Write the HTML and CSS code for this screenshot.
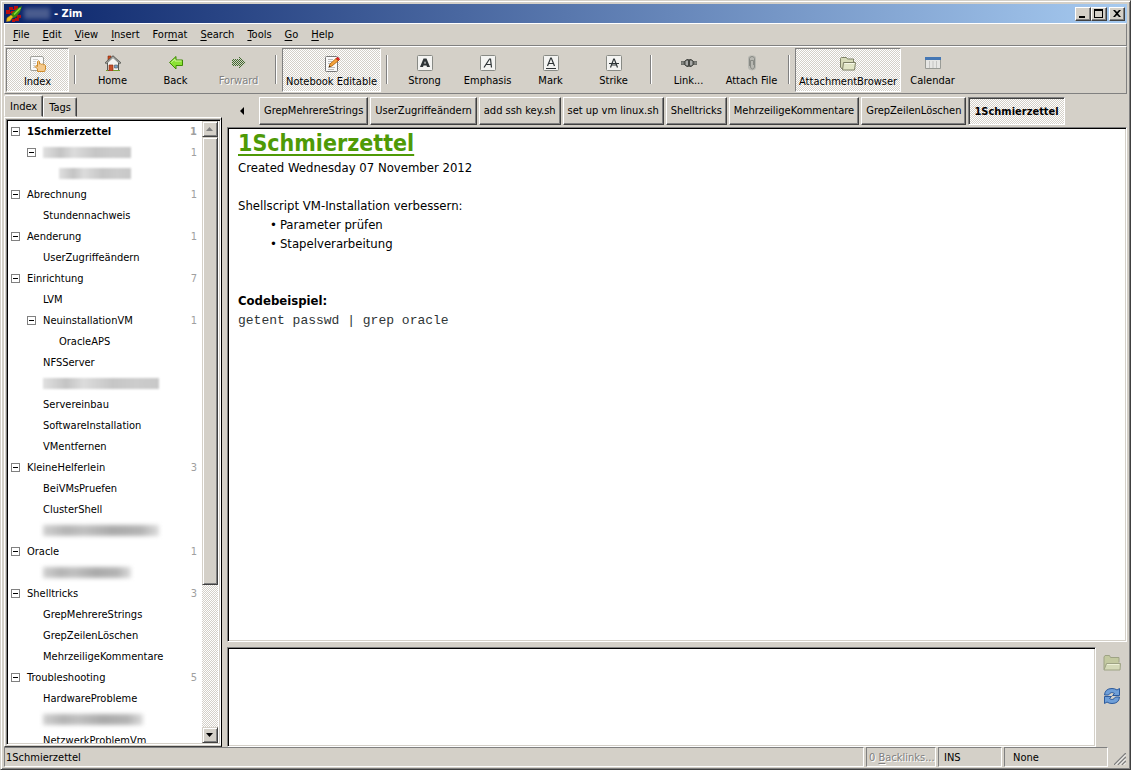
FILE: index.html
```html
<!DOCTYPE html>
<html lang="en">
<head>
<meta charset="utf-8">
<title>Zim</title>
<link rel="stylesheet" href="styles.css">
</head>
<body>
<div class="window">
  <header class="titlebar">
    <svg class="logo" viewBox="0 0 16 16"><g fill="#b80f0f"><path d="M3 1h4v3H3zM8 0h4v3H8zM0 4h4v4H0zM5 5h4v3H5zM9 12h4v3H9zM11 9h4v3h-4zM6 13h3v3H6z"/><path d="M4 3h6v1H4zM3 6h3v1H3z"/></g><path d="M16 0L12 2 6 7l-1 3 2 2 3-1 4-5z" fill="#3f8a0c"/><path d="M14.500 2L8 8.500" stroke="#8ae234" stroke-width="1.500"/><path d="M5 9L1 12l-.5 3.500L4 15l3-4z" fill="#edc31a" stroke="#a8820a" stroke-width=".5"/></svg>
    <span class="smudge smudge-title"></span>
    <h1 class="title">- Zim</h1>
    <div class="controls">
      <button class="ctl" aria-label="Minimize"><svg viewBox="0 0 12 10"><path d="M2 7h6v2H2z"/></svg></button>
      <button class="ctl" aria-label="Maximize"><svg viewBox="0 0 12 10"><path d="M1 0h9v9H1zM2 2v6h7V2z" fill-rule="evenodd"/></svg></button>
      <button class="ctl ctl-close" aria-label="Close"><svg viewBox="0 0 12 10"><path d="M2 1h2l2 2 2-2h2L7 4.500l3 3.500H8L6 6 4 8H2l3-3.500z"/></svg></button>
    </div>
  </header>
  <nav class="menubar" aria-label="Menu">
    <button class="menu"><u>F</u>ile</button><button class="menu"><u>E</u>dit</button><button class="menu"><u>V</u>iew</button><button class="menu"><u>I</u>nsert</button><button class="menu">For<u>m</u>at</button><button class="menu"><u>S</u>earch</button><button class="menu"><u>T</u>ools</button><button class="menu"><u>G</u>o</button><button class="menu"><u>H</u>elp</button>
  </nav>
  <div class="toolbar" role="toolbar">
    <button class="tool pressed" aria-pressed="true"><svg class="icon" viewBox="0 0 16 16"><rect x=".5" y=".5" width="13" height="14" rx="1.500" fill="#fafafa" stroke="#a0a09a"/><path d="M3 3.500h5M3 5.500h3M3 7.500h3M3 9.500h2M3 11.500h3" stroke="#ccc"/><path d="M7.500 15.500V13L5 10.500 6 9.500l1.500 1V5.500q1-1.500 2 0V8q1-.8 2 .3 1.200-.7 2 .4 1.500-.5 2 .8V13l-1 2.500z" fill="#f5c98b" stroke="#ce8b2a"/></svg>Index</button>
    <span class="sep"></span>
    <button class="tool"><svg class="icon" viewBox="0 0 16 16"><path d="M3 1h3v5H3z" fill="#d2491b" stroke="#7a2a10" stroke-width=".6"/><path d="M2.500 7v8.500h11V7L8 2z" fill="#f4f4f2" stroke="#555753"/><path d="M.5 8.500L8 1.500l7.500 7" fill="none" stroke="#555753" stroke-width="2"/><path d="M1 8.300L8 1.800l7 6.500" fill="none" stroke="#d8d8d4" stroke-width=".8"/><path d="M4 10h4v6H4z" fill="#c8502a" stroke="#8f2f12" stroke-width=".7"/><path d="M9.500 10h3v3h-3z" fill="#729fcf" stroke="#555753" stroke-width=".6"/><path d="M1 15.500h2M8 15.500h7" stroke="#73a02c"/></svg>Home</button>
    <button class="tool"><svg class="icon" viewBox="0 0 16 16"><path d="M1.500 7.500L8 1.500v3.500h6.500v5.500H8v3.500z" fill="#8ae234" stroke="#3f8a05"/><path d="M3.200 7.500L7 4v2h6.500" fill="none" stroke="#d0f79a"/></svg>Back</button>
    <button class="tool" disabled><svg class="icon" viewBox="0 0 16 16"><defs><pattern id="dither" width="2" height="2" patternUnits="userSpaceOnUse"><path d="M0 0h1v1H0zM1 1h1v1H1z" fill="#3f6a2c"/></pattern></defs><path d="M15 7.500L8 1v3H1v7h7v3z" fill="url(#dither)"/></svg>Forward</button>
    <span class="sep"></span>
    <button class="tool pressed" aria-pressed="true"><svg class="icon" viewBox="0 0 16 16"><rect x="1.500" y=".5" width="12" height="15" rx="1" fill="#fafafa" stroke="#777"/><path d="M4 3.500h5M4 5.500h4M4 7.500h3M4 11.500h7M4 13.500h6" stroke="#bbb"/><path d="M5 11l1-3 6-5.500 2.500 2L8 10z" fill="#f5a33b" stroke="#a85c08" stroke-width=".8"/><path d="M12 2.500l1-1q2-.5 2.500 2l-1 1z" fill="#ef2929" stroke="#a40000" stroke-width=".6"/><path d="M5 11l.5-1.500 1 1z"/></svg>Notebook Editable</button>
    <span class="sep"></span>
    <button class="tool"><svg class="icon" viewBox="0 0 16 16"><rect class="key" x=".5" y=".5" width="15" height="15" rx="1"/><path d="M3 12L6.500 3.500h3L13 12h-3l-.5-1.500h-3L6 12zM7.200 8.500h1.700L8 6z" fill="#2e3436" fill-rule="evenodd"/></svg>Strong</button>
    <button class="tool"><svg class="icon" viewBox="0 0 16 16"><rect class="key" x=".5" y=".5" width="15" height="15" rx="1"/><path class="ink" d="M4 12.500L9.500 4h1l1 8.500M6.500 9.500h4.500"/></svg>Emphasis</button>
    <button class="tool"><svg class="icon" viewBox="0 0 16 16"><rect class="key" x=".5" y=".5" width="15" height="15" rx="1"/><path class="ink" d="M4.500 11L7.700 3h.6l3.200 8M5.500 8.500h5M3 13.500h10"/></svg>Mark</button>
    <button class="tool"><svg class="icon" viewBox="0 0 16 16"><rect class="key" x=".5" y=".5" width="15" height="15" rx="1"/><path class="ink" d="M4.500 12.500L7.700 4h.6l3.200 8.500M5.500 10h5M3 8.500h10"/></svg>Strike</button>
    <span class="sep"></span>
    <button class="tool"><svg class="icon" viewBox="0 0 16 16"><path d="M0 6.500h4v3H0zM12 6.500h4v3h-4z" fill="#888a85" stroke="#555753" stroke-width=".7"/><path d="M7.500 4.500H6Q3 6 3 8t3 3.500h1.500zM8.500 4.500H10Q13 6 13 8t-3 3.500H8.500z" fill="#777975" stroke="#444642"/><path d="M6 6v4M10 6v4" stroke="#ddd"/></svg>Link...</button>
    <button class="tool"><svg class="icon" viewBox="0 0 16 16"><path d="M4 3q0-2 2-2.500h4q2 .5 2 2.500v9q0 3-4 3.500Q4 15 4 12z" fill="#b8b8b2"/><path d="M5.500 11V3.500q.5-2 2.500-2t2.500 2V12q-.5 2-2 2t-2-2V5.500h3V10" fill="none" stroke="#888a85"/></svg>Attach File</button>
    <span class="sep"></span>
    <button class="tool pressed" aria-pressed="true"><svg class="icon" viewBox="0 0 16 16"><path d="M.5 2.500l1-1h5l1 1.500h6v9l-1 1H2l-1.500-2z" fill="#d7dbb8" stroke="#7d8065"/><path d="M3.500 6.500h12l-1 7.500h-12z" fill="#e2e6c6" stroke="#7d8065"/><path d="M4.500 7.500h10" stroke="#f6f8e8"/></svg>AttachmentBrowser</button>
    <button class="tool"><svg class="icon" viewBox="0 0 16 16"><path d="M.5 2.500h15v11H.5z" fill="#e6e6e4" stroke="#999b96"/><path d="M0 2h16v3H0z" fill="#4577b4"/><path d="M4.500 6v7M8 6v7M11.500 6v7" stroke="#c4c4c2"/></svg>Calendar</button>
  </div>
  <div class="body">
    <aside class="side">
      <div class="tabs" role="tablist"><button class="tab current" role="tab" aria-selected="true">Index</button><button class="tab" role="tab">Tags</button></div>
      <div class="frame">
        <div class="sunken index">
          <ul class="tree">
            <li class="row strong"><button class="fold" aria-label="Collapse"></button><span>1Schmierzettel</span><span class="count">1</span></li>
            <li class="row l2"><button class="fold" aria-label="Collapse"></button><span class="smudge w88"></span><span class="count">1</span></li>
            <li class="row l3"><span class="smudge w72"></span></li>
            <li class="row"><button class="fold" aria-label="Collapse"></button><span>Abrechnung</span><span class="count">1</span></li>
            <li class="row l2 leaf">Stundennachweis</li>
            <li class="row"><button class="fold" aria-label="Collapse"></button><span>Aenderung</span><span class="count">1</span></li>
            <li class="row l2 leaf">UserZugriffeändern</li>
            <li class="row"><button class="fold" aria-label="Collapse"></button><span>Einrichtung</span><span class="count">7</span></li>
            <li class="row l2 leaf">LVM</li>
            <li class="row l2"><button class="fold" aria-label="Collapse"></button><span>NeuinstallationVM</span><span class="count">1</span></li>
            <li class="row l3 leaf">OracleAPS</li>
            <li class="row l2 leaf">NFSServer</li>
            <li class="row l2 leaf"><span class="smudge w116"></span></li>
            <li class="row l2 leaf">Servereinbau</li>
            <li class="row l2 leaf">SoftwareInstallation</li>
            <li class="row l2 leaf">VMentfernen</li>
            <li class="row"><button class="fold" aria-label="Collapse"></button><span>KleineHelferlein</span><span class="count">3</span></li>
            <li class="row l2 leaf">BeiVMsPruefen</li>
            <li class="row l2 leaf">ClusterShell</li>
            <li class="row l2 leaf"><span class="smudge dark w116"></span></li>
            <li class="row"><button class="fold" aria-label="Collapse"></button><span>Oracle</span><span class="count">1</span></li>
            <li class="row l2 leaf"><span class="smudge dark w88"></span></li>
            <li class="row"><button class="fold" aria-label="Collapse"></button><span>Shelltricks</span><span class="count">3</span></li>
            <li class="row l2 leaf">GrepMehrereStrings</li>
            <li class="row l2 leaf">GrepZeilenLöschen</li>
            <li class="row l2 leaf">MehrzeiligeKommentare</li>
            <li class="row"><button class="fold" aria-label="Collapse"></button><span>Troubleshooting</span><span class="count">5</span></li>
            <li class="row l2 leaf">HardwareProbleme</li>
            <li class="row l2 leaf"><span class="smudge dark w100"></span></li>
            <li class="row l2 leaf">NetzwerkProblemVm</li>
          </ul>
          <div class="scrollbar">
            <button class="step" disabled aria-label="Scroll up"><svg viewBox="0 0 8 5"><path d="M0 4h7L3.500 0z" fill="#808080"/></svg></button>
            <div class="track"><div class="thumb"></div></div>
            <button class="step" aria-label="Scroll down"><svg viewBox="0 0 8 5"><path d="M0 0h7L3.500 4z"/></svg></button>
          </div>
        </div>
      </div>
    </aside>
    <main class="main">
      <nav class="path" aria-label="History">
        <button class="prev" aria-label="Previous"><svg viewBox="0 0 4 8"><path d="M4 0v8L0 4z"/></svg></button>
        <button class="crumb">GrepMehrereStrings</button><button class="crumb">UserZugriffeändern</button><button class="crumb">add ssh key.sh</button><button class="crumb">set up vm linux.sh</button><button class="crumb">Shelltricks</button><button class="crumb">MehrzeiligeKommentare</button><button class="crumb">GrepZeilenLöschen</button><button class="crumb active" aria-pressed="true">1Schmierzettel</button>
      </nav>
      <article class="sunken editor">
        <h2 class="heading">1Schmierzettel</h2>
        <p>Created Wednesday 07 November 2012</p>
        <p><br></p>
        <p>Shellscript VM-Installation verbessern:</p>
        <ul class="bullets"><li>Parameter prüfen</li><li>Stapelverarbeitung</li></ul>
        <p><br></p>
        <p><br></p>
        <p><b>Codebeispiel:</b></p>
        <p><code>getent passwd | grep oracle</code></p>
      </article>
      <section class="attachments" aria-label="Attachments">
        <div class="sunken files"></div>
        <div class="file-tools">
          <button class="plain" aria-label="Open folder"><svg viewBox="0 0 18 16"><path d="M1 14.500V2l1-1.500h4.500l1 2H16v5" fill="#c3c9a0" stroke="#9ea384"/><path d="M1 15l2.500-6.500h14L17 15z" fill="#d5dab8" stroke="#9ea384"/><path d="M4 9.500h12" stroke="#eef1d8"/></svg></button>
          <button class="plain" aria-label="Refresh"><svg viewBox="0 0 18 18"><g fill="#6f9fd8" stroke="#2c5a9c"><path d="M1.500 8Q2 1.500 9 1.500q3 0 5 1.500l2.500-1.500V8.500H9.500l2-2Q8 4 5.500 8z"/><path d="M16.500 10Q16 16.500 9 16.500q-3 0-5-1.500L1.500 16.500V9.500h7l-2 2q3.500 2.500 6-1.500z"/></g></svg></button>
        </div>
      </section>
    </main>
  </div>
  <footer class="status">
    <span class="cell grow">1Schmierzettel</span>
    <button class="cell backlinks" disabled>0 <u>B</u>acklinks...</button>
    <span class="cell mode">INS</span>
    <span class="cell kind">None</span>
    <svg class="grip" viewBox="0 0 12 12"><path d="M0 12L12 0M4 12l8-8M8 12l4-4" stroke="#808080" stroke-width="1.500"/><path d="M1.500 12L12 1.500M5.500 12L12 5.500M9.500 12L12 9.500" stroke="#fff"/></svg>
  </footer>
</div>
</body>
</html>
```

FILE: styles.css
```css
* { box-sizing: border-box; }
body {
  margin: 0;
  font: 11px/13px "DejaVu Sans Condensed", "DejaVu Sans", sans-serif;
  color: #000;
  background: #d4d0c8;
}
h1, h2, p, ul { margin: 0; padding: 0; }
ul { list-style: none; }
button { font: inherit; color: inherit; background: #d4d0c8; border: 0; padding: 0; margin: 0; }
u { text-underline-offset: 2px; }
svg { display: block; }

.window {
  height: 100vh;
  display: flex;
  flex-direction: column;
  padding: 2px;
  border: 1px solid;
  border-color: #d4d0c8 #404040 #404040 #d4d0c8;
  box-shadow: inset 1px 1px #fff, inset -1px -1px #808080;
}

.titlebar {
  height: 19px;
  flex: none;
  display: flex;
  align-items: center;
  margin: 1px 1px 0;
  padding: 0 2px;
  color: #fff;
  background: linear-gradient(to right, #0a246a, #a6caf0);
}
.logo { width: 16px; height: 16px; margin-right: 2px; }
.title { margin-left: 4px; font-size: 11px; font-weight: bold; }
.controls { display: flex; margin-left: auto; }
.ctl {
  width: 16px; height: 14px;
  padding: 1px;
  border: 1px solid;
  border-color: #fff #404040 #404040 #fff;
  box-shadow: inset -1px -1px #808080;
}
.ctl svg { width: 12px; height: 10px; }
.ctl-close { margin-left: 2px; }

.menubar {
  height: 23px;
  flex: none;
  display: flex;
  align-items: center;
  margin: 0 1px;
  padding-left: 2px;
  border: 1px solid;
  border-color: #fff #808080 #808080 #fff;
}
.menu { padding: 2px 7px 2px 6px; }

.toolbar {
  height: 48px;
  flex: none;
  display: flex;
  margin: 0 1px;
  padding: 1px;
  border: 1px solid;
  border-color: #fff #808080 #808080 #fff;
}
.tool {
  min-width: 63px;
  display: flex;
  flex-direction: column;
  align-items: center;
  gap: 3px;
  padding: 6px 3px 0;
  border: 1px solid transparent;
  white-space: nowrap;
}
.tool .icon { width: 16px; height: 16px; }
.tool:disabled, .backlinks:disabled { color: #808080; text-shadow: 1px 1px #fff; }
.pressed {
  padding-top: 7px;
  border-color: #808080 #fff #fff #808080;
}
.pressed, .active, .track {
  background: repeating-conic-gradient(#fff 0 25%, #d4d0c8 0 50%) 0 0 / 2px 2px;
}
.sep { width: 2px; margin: 7px 5px 8px; border-left: 1px solid #808080; border-right: 1px solid #fff; }
.key { fill: #f4f4f2; stroke: #888a85; }
.ink { fill: none; stroke: #2e3436; stroke-width: 1.2; }

.body { flex: 1; min-height: 0; display: flex; gap: 5px; padding: 0 1px; }
.sunken {
  background: #fff;
  border: 1px solid;
  border-color: #808080 #fff #fff #808080;
  box-shadow: inset 1px 1px #000, inset -1px -1px #d4d0c8;
}

.side { width: 218px; display: flex; flex-direction: column; padding-top: 1px; }
.tabs { height: 22px; flex: none; display: flex; align-items: flex-end; }
.tab {
  height: 20px;
  padding: 0 5px;
  border: 1px solid;
  border-color: #fff #404040 transparent #fff;
  border-radius: 2px 2px 0 0;
  box-shadow: inset -1px 0 #808080;
}
.tab.current { height: 22px; }
.frame {
  flex: 1;
  min-height: 0;
  display: flex;
  padding: 1px 0 1px 1px;
  border: 1px solid;
  border-color: #fff #000 #404040 #fff;
}
.index { flex: 1; min-width: 0; display: flex; padding: 1px 2px; }
.tree { flex: 1; overflow: hidden; }
.row { height: 21px; display: flex; align-items: center; padding: 0 5px 0 2px; }
.strong { font-weight: bold; }
.fold {
  width: 9px; height: 9px;
  flex: none;
  margin-right: 7px;
  border: 1px solid #808080;
  background: linear-gradient(#000, #000) center / 5px 1px no-repeat #fff;
}
.l2 { padding-left: 18px; }
.l3 { padding-left: 50px; }
.leaf { padding-left: 34px; }
.l3.leaf { padding-left: 50px; }
.count { margin-left: auto; color: #a0a0a0; }
.smudge {
  height: 11px;
  background: linear-gradient(to right, #e0e0e0, #c4c4c4 20%, #dcdcdc 35%, #c6c6c6 60%, #ccc 80%, #c8c8c8);
  filter: blur(1px);
}
.dark { background: linear-gradient(to right, #d0d0d0, #b4b4b4 20%, #c0c0c0 35%, #aaa 60%, #b4b4b4 85%, #ddd); filter: blur(2px); }
.smudge-title { width: 26px; background: #4a5c8e; filter: blur(2px); }
.w72 { width: 72px; }
.w88 { width: 88px; }
.w100 { width: 100px; }
.w116 { width: 116px; }

.scrollbar { width: 16px; display: flex; flex-direction: column; }
.step {
  height: 16px;
  flex: none;
  display: flex;
  align-items: center;
  justify-content: center;
}
.step svg { width: 8px; height: 5px; }
.step, .thumb {
  background: #d4d0c8;
  border: 1px solid;
  border-color: #d4d0c8 #404040 #404040 #d4d0c8;
  box-shadow: inset 1px 1px #fff, inset -1px -1px #808080;
}
.track { flex: 1; }
.thumb { height: 76%; }

.main { flex: 1; min-width: 0; display: flex; flex-direction: column; }
.path { height: 33px; flex: none; display: flex; align-items: center; gap: 2px; }
.prev { width: 30px; height: 28px; display: flex; align-items: center; justify-content: center; }
.prev svg { width: 4px; height: 8px; }
.crumb {
  height: 28px;
  padding: 0 4px;
  border: 1px solid;
  border-color: #fff #404040 #404040 #fff;
  box-shadow: inset -1px -1px #808080;
  white-space: nowrap;
}
.active {
  padding: 2px 5px 0;
  font-weight: bold;
  border-color: #808080 #fff #fff #808080;
  box-shadow: inset 1px 1px #404040;
}
.editor {
  flex: 1;
  min-height: 0;
  overflow: hidden;
  padding: 0 10px;
  font-size: 13px;
  line-height: 19px;
}
.heading {
  color: #4e9a06;
  font: bold 23px/30px "DejaVu Sans Condensed", sans-serif;
  text-decoration: underline;
  text-decoration-thickness: 2px;
  text-underline-offset: 3px;
}
.bullets { padding-left: 32px; }
.bullets li::before { content: "•"; margin-right: 3px; }
code { font: 13px/19px "Liberation Mono", monospace; color: #2e3436; }
.attachments { height: 105px; flex: none; display: flex; padding-top: 5px; }
.files { flex: 1; }
.file-tools { width: 31px; display: flex; flex-direction: column; align-items: center; gap: 16px; padding-top: 8px; }
.plain svg { width: 18px; height: 16px; }
.plain:last-child svg { height: 18px; }

.status { height: 20px; flex: none; display: flex; gap: 2px; padding: 0 1px; }
.cell {
  display: flex;
  align-items: center;
  white-space: pre;
  border: 1px solid;
  border-color: #808080 #fff #fff #808080;
}
.grow { flex: 1; padding-left: 1px; }
.backlinks { width: 70px; padding-left: 2px; }
.mode { width: 64px; padding-left: 5px; }
.kind { width: 104px; padding-left: 8px; }
.grip { width: 12px; height: 12px; margin: 6px 1px 0 4px; }
```
